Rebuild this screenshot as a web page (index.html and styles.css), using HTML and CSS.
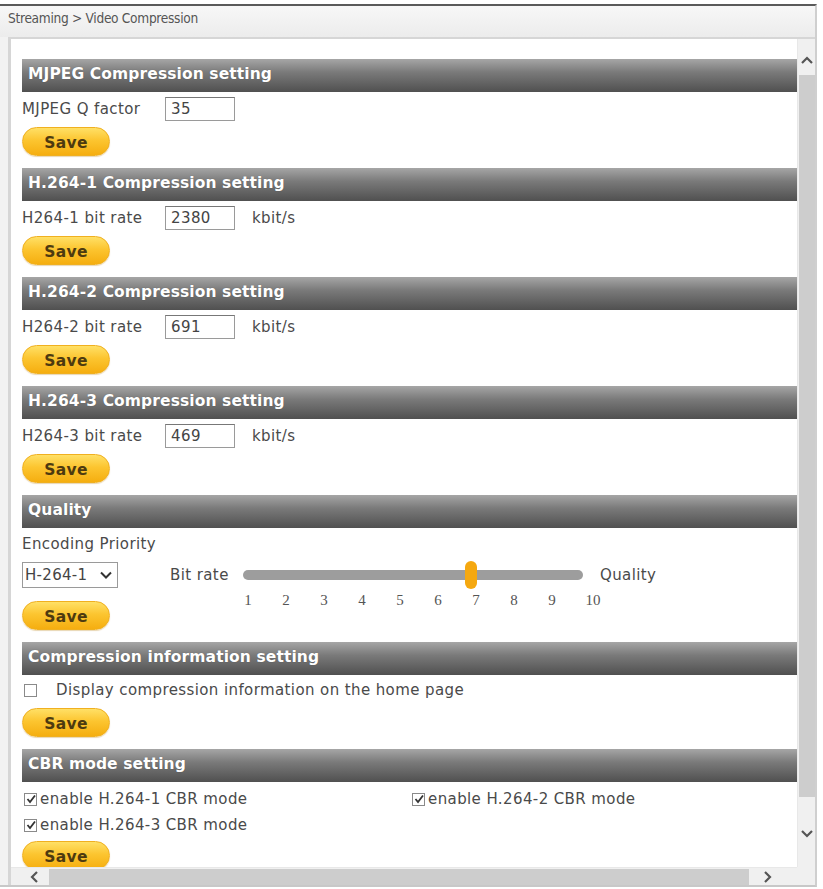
FILE: index.html
```html
<!DOCTYPE html>
<html>
<head>
<meta charset="utf-8">
<link rel="stylesheet" href="styles.css">
</head>
<body>
<div class="window">
  <div class="crumb">Streaming &gt; Video Compression</div>
  <div class="frame">
    <div class="viewport">
      <div class="content">
        <section class="sec">
          <div class="hdr">MJPEG Compression setting</div>
          <div class="row"><span class="lbl">MJPEG Q factor</span><span class="inp">35</span></div>
          <button class="save">Save</button>
        </section>
        <section class="sec">
          <div class="hdr">H.264-1 Compression setting</div>
          <div class="row"><span class="lbl">H264-1 bit rate</span><span class="inp">2380</span><span class="unit">kbit/s</span></div>
          <button class="save">Save</button>
        </section>
        <section class="sec">
          <div class="hdr">H.264-2 Compression setting</div>
          <div class="row"><span class="lbl">H264-2 bit rate</span><span class="inp">691</span><span class="unit">kbit/s</span></div>
          <button class="save">Save</button>
        </section>
        <section class="sec">
          <div class="hdr">H.264-3 Compression setting</div>
          <div class="row"><span class="lbl">H264-3 bit rate</span><span class="inp">469</span><span class="unit">kbit/s</span></div>
          <button class="save">Save</button>
        </section>
        <section class="sec">
          <div class="hdr">Quality</div>
          <div class="enc">Encoding Priority</div>
          <div class="qrow">
            <div class="select"><span>H-264-1</span><svg width="12" height="8" viewBox="0 0 12 8"><path d="M1 1.5 L6 6.5 L11 1.5" fill="none" stroke="#333" stroke-width="2"/></svg></div>
            <span class="qlbl">Bit rate</span>
            <div class="track"><div class="thumb"></div></div>
            <span class="qend">Quality</span>
          </div>
          <div class="qrow2">
            <button class="save">Save</button>
            <div class="nums"><span>1</span><span>2</span><span>3</span><span>4</span><span>5</span><span>6</span><span>7</span><span>8</span><span>9</span><span>10</span></div>
          </div>
        </section>
        <section class="sec">
          <div class="hdr">Compression information setting</div>
          <div class="chk"><span class="box"></span><span class="chktxt wide">Display compression information on the home page</span></div>
          <button class="save">Save</button>
        </section>
        <section class="sec">
          <div class="hdr">CBR mode setting</div>
          <div class="cbr">
            <div class="chk"><span class="box on"><svg width="12" height="12" viewBox="0 0 12 12"><path d="M2.5 6 L5 9 L10 2.5" fill="none" stroke="#333" stroke-width="1.8"/></svg></span><span class="chktxt">enable H.264-1 CBR mode</span></div>
            <div class="chk"><span class="box on"><svg width="12" height="12" viewBox="0 0 12 12"><path d="M2.5 6 L5 9 L10 2.5" fill="none" stroke="#333" stroke-width="1.8"/></svg></span><span class="chktxt">enable H.264-2 CBR mode</span></div>
            <div class="chk"><span class="box on"><svg width="12" height="12" viewBox="0 0 12 12"><path d="M2.5 6 L5 9 L10 2.5" fill="none" stroke="#333" stroke-width="1.8"/></svg></span><span class="chktxt">enable H.264-3 CBR mode</span></div>
          </div>
          <button class="save">Save</button>
        </section>
      </div>
      <div class="vscroll">
        <svg class="arr" width="14" height="10" viewBox="0 0 14 10"><path d="M2 8 L7 3 L12 8" fill="none" stroke="#555" stroke-width="2.2"/></svg>
        <div class="vthumb"></div>
        <svg class="arr" width="14" height="10" viewBox="0 0 14 10"><path d="M2 2 L7 7 L12 2" fill="none" stroke="#555" stroke-width="2.2"/></svg>
      </div>
      <div class="hscroll">
        <svg class="arr" width="10" height="14" viewBox="0 0 10 14"><path d="M8 2 L3 7 L8 12" fill="none" stroke="#555" stroke-width="2.2"/></svg>
        <div class="hthumb"></div>
        <svg class="arr" width="10" height="14" viewBox="0 0 10 14"><path d="M2 2 L7 7 L2 12" fill="none" stroke="#555" stroke-width="2.2"/></svg>
      </div>
      <div class="corner"></div>
    </div>
  </div>
</div>
</body>
</html>
```
FILE: styles.css
```css
html, body {
  margin: 0;
  padding: 0;
}
body {
  width: 823px;
  height: 889px;
  background: #ffffff;
  font-family: "DejaVu Sans", Verdana, sans-serif;
  color: #4a4a4a;
  overflow: hidden;
}
.window {
  width: 817px;
  height: 883px;
  margin-top: 4px;
  border-top: 2px solid #5a5a5a;
  border-right: 2px solid #cfcfcf;
  border-bottom: 2px solid #c8c8c8;
  box-sizing: border-box;
  background: #f2f2f2;
  display: flex;
  flex-direction: column;
}
.crumb {
  height: 31px;
  flex: none;
  padding-left: 8px;
  font-family: "DejaVu Sans Condensed", "DejaVu Sans", sans-serif;
  font-size: 13.6px;
  line-height: 25px;
  color: #555;
  background: linear-gradient(#f7f7f7, #ececec);
  letter-spacing: -0.3px;
}
.frame {
  flex: 1;
  margin-left: 8px;
  border-left: 3px solid #d6d6d6;
  border-top: 2px solid #d6d6d6;
  background: #fff;
  min-height: 0;
}
.viewport {
  height: 100%;
  display: grid;
  grid-template-columns: 1fr 18px;
  grid-template-rows: 1fr 18px;
}
.content {
  overflow: hidden;
  padding: 20px 0 0 11px;
  min-height: 0;
  font-size: 15px;
  letter-spacing: 0.4px;
}
.sec {
  display: flex;
  flex-direction: column;
  align-items: flex-start;
  margin-bottom: 12px;
}
.hdr {
  align-self: stretch;
  height: 33px;
  box-sizing: border-box;
  padding-left: 6px;
  font-weight: bold;
  font-size: 15.5px;
  letter-spacing: 0.1px;
  line-height: 31px;
  color: #fff;
  background: linear-gradient(#a6a6a6, #7a7a7a 40%, #505050);
  text-shadow: 0 0 1px rgba(0,0,0,0.3);
}
.row {
  display: flex;
  align-items: center;
  height: 24px;
  margin-top: 5px;
}
.lbl {
  width: 143px;
  flex: none;
}
.inp {
  width: 70px;
  height: 24px;
  box-sizing: border-box;
  border: 1px solid #9a9a9a;
  border-top-color: #777;
  padding-left: 5px;
  line-height: 22px;
  color: #444;
}
.unit {
  margin-left: 17px;
}
.save {
  width: 88px;
  height: 29px;
  margin-top: 6px;
  border: 1px solid #f0b020;
  border-radius: 15px;
  background: linear-gradient(#ffe066, #fcc530 45%, #f5ae10);
  font-family: "DejaVu Sans", Verdana, sans-serif;
  font-weight: bold;
  font-size: 15.5px;
  letter-spacing: 0.3px;
  color: #4d3a10;
  padding: 2px 0 0 0;
  box-shadow: 0 1px 1px rgba(180,120,0,0.3);
}
.enc {
  height: 20px;
  line-height: 20px;
  margin-top: 6px;
}
.qrow {
  display: flex;
  align-items: center;
  height: 28px;
  margin-top: 7px;
}
.select {
  width: 96px;
  height: 26px;
  box-sizing: border-box;
  border: 1px solid #9a9a9a;
  display: flex;
  align-items: center;
  justify-content: space-between;
  padding: 0 5px 0 2px;
  color: #444;
  letter-spacing: 0.3px;
}
.qlbl {
  margin-left: 52px;
  width: 73px;
}
.track {
  position: relative;
  width: 340px;
  height: 10px;
  border-radius: 5px;
  background: #9d9d9d;
}
.thumb {
  position: absolute;
  left: 222px;
  top: -9px;
  width: 12px;
  height: 28px;
  border-radius: 6px;
  background: #f5a810;
}
.qend {
  margin-left: 17px;
}
.qrow2 {
  display: flex;
  align-items: flex-start;
}
.qrow2 .save {
  margin-top: 12px;
}
.nums {
  display: flex;
  margin-left: 119px;
  margin-top: 3px;
  font-family: "Liberation Serif", "DejaVu Serif", serif;
  font-size: 15px;
  letter-spacing: 0;
  color: #555;
}
.nums span {
  width: 38px;
  text-align: center;
}
.nums span:last-child {
  margin-left: 3px;
}
.chk {
  display: flex;
  align-items: center;
  height: 20px;
  margin-top: 5px;
}
.box {
  width: 11px;
  height: 11px;
  flex: none;
  border: 1px solid #8a8a8a;
  margin-left: 2px;
  display: flex;
  align-items: center;
  justify-content: center;
  background: #fff;
}
.box svg {
  flex: none;
}
.chktxt {
  margin-left: 3px;
}
.chktxt.wide {
  margin-left: 19px;
}
.sec > .chk + .save {
  margin-top: 8px;
}
.cbr {
  display: grid;
  grid-template-columns: 388px auto;
  row-gap: 6px;
  margin-top: 7px;
}
.cbr .chk {
  margin-top: 0;
}
.cbr + .save {
  margin-top: 6px;
}
.vscroll {
  background: #f0f0f0;
  display: flex;
  flex-direction: column;
  align-items: center;
  padding-top: 16px;
  border-left: 1px solid #e8e8e8;
}
.vthumb {
  width: 16px;
  flex: none;
  height: 722px;
  margin: 10px 0 32px 0;
  background: #cdcdcd;
}
.hscroll {
  background: #f0f0f0;
  display: flex;
  align-items: center;
  padding-left: 18px;
  border-top: 1px solid #e8e8e8;
}
.hthumb {
  width: 700px;
  height: 16px;
  margin: 0 14px 0 10px;
  background: #cdcdcd;
}
.corner {
  background: #f0f0f0;
}
```
